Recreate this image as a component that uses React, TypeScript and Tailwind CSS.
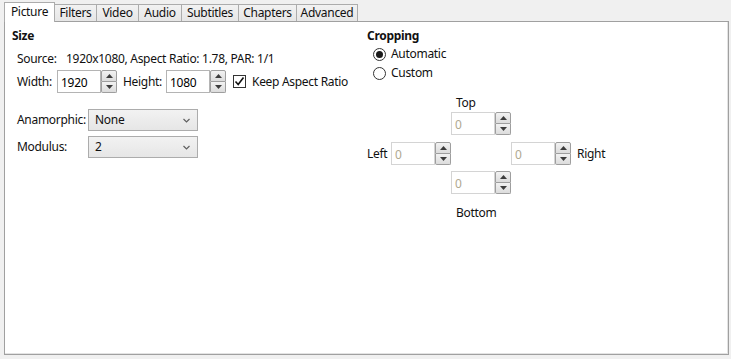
import React from "react";

const tabs = [
  { label: "Picture", w: "w-[51px]" },
  { label: "Filters", w: "w-[43px]" },
  { label: "Video", w: "w-[43px]" },
  { label: "Audio", w: "w-[44px]" },
  { label: "Subtitles", w: "w-[58px]" },
  { label: "Chapters", w: "w-[59px]" },
  { label: "Advanced", w: "w-[62px]" },
];

function Arrow({ up }: { up?: boolean }) {
  return (
    <svg width="7" height="4" viewBox="0 0 7 4" className="block">
      {up ? <path d="M0 4 L3.5 0 L7 4 Z" fill="#3c3c3c" /> : <path d="M0 0 L7 0 L3.5 4 Z" fill="#3c3c3c" />}
    </svg>
  );
}

function Spin({ value, disabled, h = "h-[23px]" }: { value: string; disabled?: boolean; h?: string }) {
  return (
    <div className={`flex ${h}`}>
      <div
        className={`w-[44px] h-full bg-white border ${
          disabled ? "border-[#d4d4d4] text-[#b0a890]" : "border-[#b4b4b4] text-black"
        } flex items-center pl-[3px] pt-[2px]`}
      >
        {value}
      </div>
      <div className="w-[16px] h-full flex flex-col">
        <div className="flex-1 border border-[#9e9e9e] rounded-t-[2px] bg-gradient-to-b from-[#f2f2f2] to-[#dcdcdc] flex items-center justify-center">
          <Arrow up />
        </div>
        <div className="flex-1 border border-t-0 border-[#9e9e9e] rounded-b-[2px] bg-gradient-to-b from-[#f2f2f2] to-[#dcdcdc] flex items-center justify-center">
          <Arrow />
        </div>
      </div>
    </div>
  );
}

function Select({ value }: { value: string }) {
  return (
    <div className="w-[110px] h-[22px] border border-[#acacac] bg-gradient-to-b from-[#f2f2f2] to-[#e6e6e6] flex items-center pl-[6px] pr-[7px] justify-between">
      <span>{value}</span>
      <svg width="7" height="5" viewBox="0 0 7 5">
        <path d="M0.5 1 L3.5 4 L6.5 1" stroke="#606060" strokeWidth="1.2" fill="none" />
      </svg>
    </div>
  );
}

function Radio({ checked }: { checked?: boolean }) {
  return (
    <div className="w-[13px] h-[13px] rounded-full border border-[#333333] bg-white flex items-center justify-center">
      {checked && <div className="w-[7px] h-[7px] rounded-full bg-[#1a1a1a]" />}
    </div>
  );
}

export default function App() {
  return (
    <div className="w-[731px] h-[359px] bg-[#f0f0f0] pl-[4px] pr-[2px] pt-[2px] pb-[4px] flex flex-col font-['Segoe_UI','Noto_Sans',sans-serif] text-[12px] leading-[16px] tracking-[-0.3px] text-[#111]">
      <div className="flex items-end h-[20px] relative z-10">
        {tabs.map((t, i) =>
          i === 0 ? (
            <div
              key={t.label}
              className={`${t.w} h-[20px] bg-white border border-b-0 border-[#acacac] flex items-center justify-center pb-[2px]`}
            >
              {t.label}
            </div>
          ) : (
            <div
              key={t.label}
              className={`${t.w} -ml-px h-[17px] mb-[1px] bg-gradient-to-b from-[#f2f2f2] to-[#e6e6e6] border border-b-0 border-[#acacac] flex items-center justify-center`}
            >
              {t.label}
            </div>
          )
        )}
      </div>
      <div className="flex-1 -mt-px bg-white border border-[#a0a0a0] shadow-[inset_-1px_-1px_0_#e3e3e3] flex pl-[7px] pt-[6px]">
        <div className="w-[355px] flex flex-col">
          <div className="font-bold">Size</div>
          <div className="flex mt-[7px] pl-[5px]">
            <span className="w-[49px]">Source:</span>
            <span>1920x1080, Aspect Ratio: 1.78, PAR: 1/1</span>
          </div>
          <div className="flex items-center mt-[3px] pl-[5px]">
            <span className="w-[40px]">Width:</span>
            <Spin value="1920" />
            <span className="w-[43px] ml-[6px]">Height:</span>
            <Spin value="1080" />
            <div className="ml-[7px] w-[13px] h-[13px] border border-[#333333] bg-white flex items-center justify-center">
              <svg width="11" height="11" viewBox="0 0 11 11">
                <path d="M1.5 5.5 L4.2 8.5 L9.5 1.5" stroke="#111" strokeWidth="1.6" fill="none" />
              </svg>
            </div>
            <span className="ml-[6px]">Keep Aspect Ratio</span>
          </div>
          <div className="flex items-center mt-[16px] pl-[5px]">
            <span className="w-[71px]">Anamorphic:</span>
            <Select value="None" />
          </div>
          <div className="flex items-center mt-[5px] pl-[5px]">
            <span className="w-[71px]">Modulus:</span>
            <Select value="2" />
          </div>
        </div>
        <div className="flex flex-col">
          <div className="font-bold">Cropping</div>
          <div className="flex items-center mt-[1px] pl-[6px] h-[18px]">
            <Radio checked />
            <span className="ml-[5px]">Automatic</span>
          </div>
          <div className="flex items-center mt-[1px] pl-[6px] h-[18px]">
            <Radio />
            <span className="ml-[5px]">Custom</span>
          </div>
          <div className="grid grid-cols-[84px_60px_auto] mt-[13px]">
            <div />
            <div className="pl-[5px] h-[16px]">Top</div>
            <div />
            <div />
            <div className="mt-[1px]">
              <Spin value="0" disabled />
            </div>
            <div />
            <div className="flex items-center mt-[7px]">
              <span className="w-[24px]">Left</span>
              <Spin value="0" disabled />
            </div>
            <div />
            <div className="flex items-center mt-[7px]">
              <Spin value="0" disabled />
              <span className="ml-[6px]">Right</span>
            </div>
            <div />
            <div className="mt-[6px]">
              <Spin value="0" disabled />
            </div>
            <div />
            <div />
            <div className="pl-[5px] mt-[11px]">Bottom</div>
            <div />
          </div>
        </div>
      </div>
    </div>
  );
}
